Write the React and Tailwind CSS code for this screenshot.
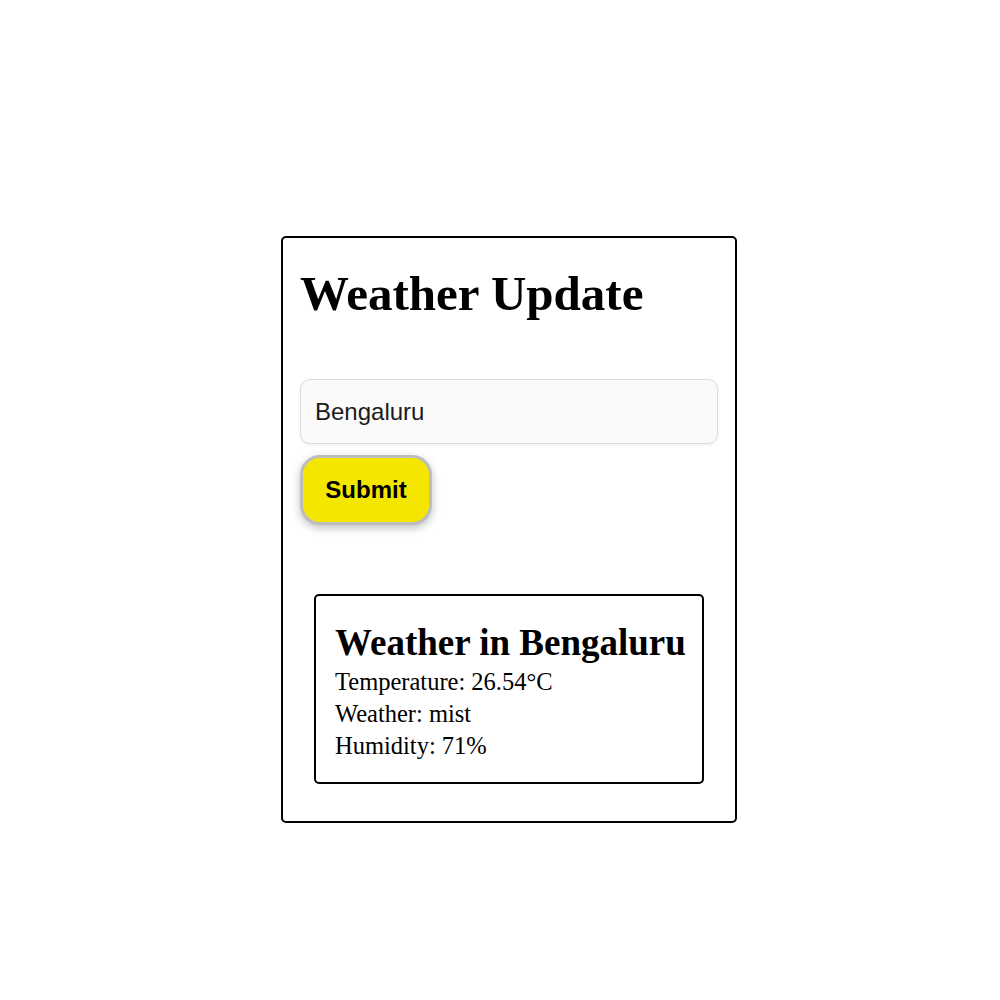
export default function App() {
    return (
        <div className="min-h-[1000px] bg-white pt-[236px] pl-[281px]">
            <div className="w-[456px] h-[587px] border-2 border-black rounded-[5px] px-[17px] pt-[28px] flex flex-col">
                <h1 className="text-[49px] leading-[56px] font-bold text-black whitespace-nowrap" style={{ fontFamily: '"Liberation Serif", serif' }}>
                    Weather Update
                </h1>

                <input
                    type="text"
                    defaultValue="Bengaluru"
                    className="mt-[57px] w-full h-[65px] px-[14px] bg-[#fafafa] border border-[#dcdcdc] rounded-[10px] text-[24px] text-[#1a1a1a] shadow-[0_1px_3px_rgba(0,0,0,0.08)] outline-none"
                    style={{ fontFamily: '"Liberation Sans", sans-serif' }}
                />

                <div className="mt-[11px]">
                    <button
                        type="button"
                        className="w-[132px] h-[70px] bg-[#f5e600] border-[3px] border-[#bdbdbd] rounded-[20px] text-[24px] font-bold text-black shadow-[0_3px_8px_rgba(0,0,0,0.25)]"
                        style={{ fontFamily: '"Liberation Sans", sans-serif' }}>
                        Submit
                    </button>
                </div>

                <div
                    className="mt-[69px] mx-[14px] h-[190px] border-2 border-black rounded-[5px] pl-[19px] pr-[4px] pt-[26px] text-black"
                    style={{ fontFamily: '"Liberation Serif", serif' }}>
                    <h2 className="text-[37px] leading-[42px] font-bold whitespace-nowrap">Weather in Bengaluru</h2>
                    <p className="text-[24.5px] leading-[32px] mt-[2px]">Temperature: 26.54°C</p>
                    <p className="text-[24.5px] leading-[32px]">Weather: mist</p>
                    <p className="text-[24.5px] leading-[32px]">Humidity: 71%</p>
                </div>
            </div>
        </div>
    );
}
